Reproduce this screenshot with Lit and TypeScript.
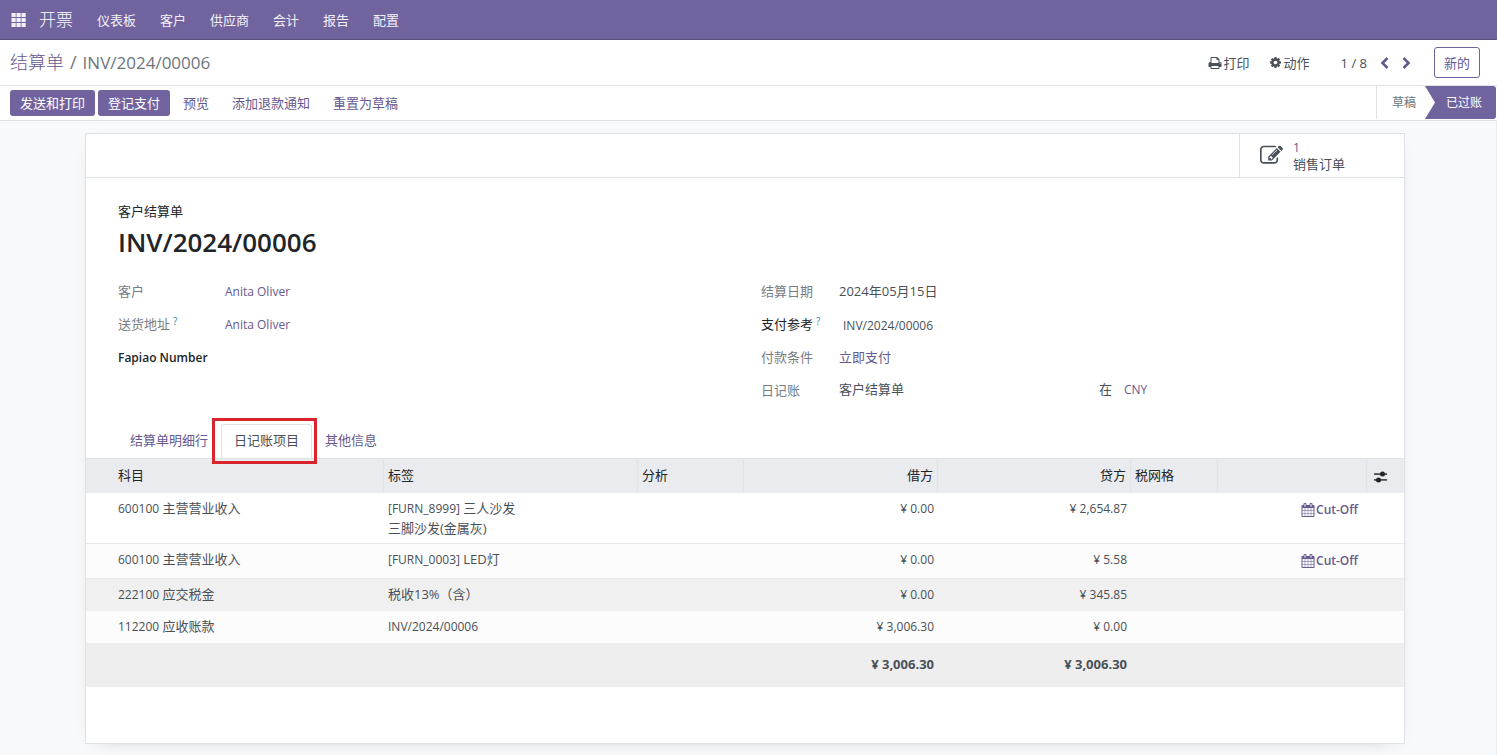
import { LitElement, html, css, svg } from "lit";
import { customElement } from "lit/decorators.js";

const ICONS = {
  print:
    "M448 1536h896v-256h-896v256zm0-640h896v-384h-160q-40 0-68-28t-28-68v-160h-640v640zm1152 64q0-26-19-45t-45-19-45 19-19 45 19 45 45 19 45-19 19-45zm128 0v416q0 13-9.5 22.5t-22.5 9.5h-224v160q0 40-28 68t-68 28h-960q-40 0-68-28t-28-68v-160h-224q-13 0-22.5-9.5t-9.5-22.5v-416q0-79 56.5-135.5t135.5-56.5h64v-544q0-40 28-68t68-28h672q40 0 88 20t76 48l152 152q28 28 48 76t20 88v256h64q79 0 135.5 56.5t56.5 135.5z",
  cog: "M1152 896q0-106-75-181t-181-75-181 75-75 181 75 181 181 75 181-75 75-181zm512-109v222q0 12-8 23t-20 13l-185 28q-19 54-39 91 35 50 107 138 10 12 10 25t-9 23q-27 37-99 108t-94 71q-12 0-26-9l-138-108q-44 23-91 38-16 136-29 186-7 28-36 28h-222q-14 0-24.5-8.5t-11.5-21.5l-28-184q-49-16-90-37l-141 107q-10 9-25 9-14 0-25-11-126-114-165-168-7-10-7-23 0-12 8-23 15-21 51-66.5t54-70.5q-27-50-41-99l-183-27q-13-2-21-12.5t-8-23.5v-222q0-12 8-23t19-13l186-28q14-46 39-92-40-57-107-138-10-12-10-24 0-10 9-23 26-36 98.5-107.5t94.5-71.5q13 0 26 10l138 107q44-23 91-38 16-136 29-186 7-28 36-28h222q14 0 24.5 8.5t11.5 21.5l28 184q49 16 90 37l142-107q9-9 24-9 13 0 25 10 129 119 165 170 7 8 7 22 0 12-8 23-15 21-51 66.5t-54 70.5q26 50 41 98l183 28q13 2 21 12.5t8 23.5z",
  edit: "M888 1184l116-116-152-152-116 116v56h96v96h56zm440-720q-16-16-33 1l-350 350q-17 17-1 33t33-1l350-350q17-17 1-33zm80 594v190q0 119-84.5 203.5t-203.5 84.5h-832q-119 0-203.5-84.5t-84.5-203.5v-832q0-119 84.5-203.5t203.5-84.5h832q63 0 117 25 15 7 18 23 3 17-9 29l-49 49q-14 14-32 8-23-6-45-6h-832q-66 0-113 47t-47 113v832q0 66 47 113t113 47h832q66 0 113-47t47-113v-126q0-13 9-22l64-64q15-15 35-7t20 29zm-96-738l288 288-672 672h-288v-288zm444 132l-92 92-288-288 92-92q28-28 68-28t68 28l152 152q28 28 28 68t-28 68z",
  calendar:
    "M192 1664h288v-288h-288v288zm352 0h320v-288h-320v288zm-352-352h288v-320h-288v320zm352 0h320v-320h-320v320zm-352-384h288v-288h-288v288zm736 736h320v-288h-320v288zm-384-736h320v-288h-320v288zm768 736h288v-288h-288v288zm-384-352h320v-320h-320v320zm-352-864v-288q0-13-9.5-22.5t-22.5-9.5h-64q-13 0-22.5 9.5t-9.5 22.5v288q0 13 9.5 22.5t22.5 9.5h64q13 0 22.5-9.5t9.5-22.5zm736 864h288v-320h-288v320zm-384-384h320v-288h-320v288zm384 0h288v-288h-288v288zm32-480v-288q0-13-9.5-22.5t-22.5-9.5h-64q-13 0-22.5 9.5t-9.5 22.5v288q0 13 9.5 22.5t22.5 9.5h64q13 0 22.5-9.5t9.5-22.5zm384-64v1280q0 52-38 90t-90 38h-1408q-52 0-90-38t-38-90v-1280q0-52 38-90t90-38h128v-96q0-66 47-113t113-47h64q66 0 113 47t47 113v96h384v-96q0-66 47-113t113-47h64q66 0 113 47t47 113v96h128q52 0 90 38t38 90z",
};

const icon = (name: keyof typeof ICONS, size: number) => html`<svg
  width=${size}
  height=${size}
  viewBox="0 0 1792 1792"
  fill="currentColor"
  aria-hidden="true"
>
  <path d=${ICONS[name]}></path>
</svg>`;

const MENUS = ["仪表板", "客户", "供应商", "会计", "报告", "配置"];

interface Line {
  code: string;
  account: string;
  ref: string;
  label: string[];
  debit: string;
  credit: string;
  cutOff: boolean;
  kind: string;
}

const LINES: Line[] = [
  { code: "600100", account: "主营营业收入", ref: "[FURN_8999]", label: ["三人沙发", "三脚沙发(金属灰)"], debit: "¥ 0.00", credit: "¥ 2,654.87", cutOff: true, kind: "product" },
  { code: "600100", account: "主营营业收入", ref: "[FURN_0003]", label: ["LED灯"], debit: "¥ 0.00", credit: "¥ 5.58", cutOff: true, kind: "product alt" },
  { code: "222100", account: "应交税金", ref: "", label: ["税收13%（含）"], debit: "¥ 0.00", credit: "¥ 345.85", cutOff: false, kind: "muted" },
  { code: "112200", account: "应收账款", ref: "INV/2024/00006", label: [], debit: "¥ 3,006.30", credit: "¥ 0.00", cutOff: false, kind: "alt" },
];

@customElement("app-root")
export class AppRoot extends LitElement {
  static styles = css`
    :host {
      display: flex;
      flex-direction: column;
      min-height: 100vh;
      box-sizing: border-box;
      font-family: "Open Sans", "Noto Sans CJK SC", sans-serif;
      font-size: 13px;
      line-height: 20px;
      color: #495057;
      background: #f8f9fa;
    }
    *,
    *::before,
    *::after {
      box-sizing: border-box;
    }
    a {
      color: inherit;
      text-decoration: none;
    }
    button,
    input {
      font: inherit;
      color: inherit;
      background: none;
      border: 0;
      padding: 0;
      margin: 0;
    }
    button {
      cursor: pointer;
    }
    svg {
      display: block;
      flex: none;
    }
    h1,
    p {
      margin: 0;
    }
    .latin {
      font-size: 12px;
    }
    .link {
      color: #66598f;
    }

    .navbar {
      display: flex;
      align-items: center;
      height: 40px;
      padding: 0 11px;
      background: #71639e;
      border-bottom: 1px solid #5a4f7f;
      color: #f3f1f8;
    }
    .brand {
      margin: 0 24px 0 13px;
      font-size: 17px;
      font-weight: 300;
      color: #fff;
    }
    .menus {
      display: flex;
      gap: 24px;
    }

    .control {
      display: flex;
      align-items: center;
      height: 46px;
      padding: 0 17px 0 10px;
      background: #fff;
      border-bottom: 1px solid #dee2e6;
    }
    .crumbs {
      display: flex;
      flex: 1;
      align-items: baseline;
      gap: 6px;
      font-size: 18px;
      color: #6c757d;
    }
    .crumbs .link {
      font-weight: 300;
    }
    .crumbs .id {
      font-size: 17px;
    }
    .tool {
      display: flex;
      align-items: center;
      gap: 2px;
      margin-right: 19px;
    }
    .pager {
      display: flex;
      align-items: center;
      gap: 13px;
      margin: 0 23px 0 12px;
    }
    .pager .link {
      display: flex;
    }
    .create {
      height: 31px;
      padding: 0 9px;
      border: 1px solid #71639e;
      border-radius: 3px;
      color: #66598f;
    }

    .statusbar {
      display: flex;
      align-items: center;
      height: 35px;
      padding: 0 1px 0 10px;
      background: #fff;
      border-bottom: 1px solid #dee2e6;
    }
    .actions {
      display: flex;
      flex: 1;
      gap: 3px;
    }
    .actions button {
      height: 26px;
      padding: 0 10px;
      border-radius: 3px;
      color: #66598f;
    }
    .actions .primary {
      background: #71639e;
      color: #fff;
    }
    .stages {
      display: flex;
      align-self: stretch;
      padding-bottom: 1px;
      font-size: 12px;
    }
    .stage {
      display: flex;
      align-items: center;
      padding: 0 9px 0 15px;
      border-left: 1px solid #dee2e6;
      color: #6c757d;
    }
    .stage.current {
      padding: 0 14px 0 21px;
      border-left: 0;
      border-radius: 0 3px 3px 0;
      background: #71639e;
      color: #fff;
      clip-path: polygon(0 0, 100% 0, 100% 100%, 0 100%, 10px 50%);
    }

    .content {
      flex: 1;
      padding: 12px 91px 11px 85px;
      border-right: 1px solid #e9ecef;
    }
    .sheet {
      min-height: 611px;
      background: #fff;
      border: 1px solid #dee2e6;
      box-shadow: 0 5px 20px -15px #0006;
    }
    .button-box {
      display: flex;
      justify-content: flex-end;
      height: 44px;
      border-bottom: 1px solid #dee2e6;
    }
    .stat {
      display: flex;
      align-items: center;
      gap: 10px;
      width: 165px;
      padding-left: 20px;
      border-left: 1px solid #dee2e6;
      text-align: left;
      line-height: 16px;
    }
    .stat-text {
      display: flex;
      flex-direction: column;
    }

    .head {
      padding: 23px 32px 0;
      color: #212529;
    }
    .head h1 {
      font-size: 26px;
      font-weight: 600;
      line-height: 42px;
    }
    .groups {
      display: grid;
      grid-template-columns: 1fr 1fr;
      gap: 32px;
      padding: 11px 32px 18px;
    }
    .group {
      display: grid;
      grid-template-columns: 78px 1fr;
      grid-auto-rows: 33px;
      align-content: start;
      align-items: center;
    }
    .group.wide {
      grid-template-columns: 107px 1fr;
    }
    .group > .latin {
      padding-top: 3px;
    }
    .group label,
    .group .label {
      white-space: nowrap;
      color: #777d83;
    }
    .group .strong {
      color: #212529;
    }
    .group .semi {
      font-weight: 600;
      color: #212529;
    }
    .group sup {
      margin-left: 3px;
      font-size: 10px;
      line-height: 0;
      vertical-align: 4px;
      color: #1f8ba3;
    }
    .group input {
      width: 100%;
      height: 24px;
      padding: 0 4px;
    }
    .journal {
      display: grid;
      grid-template-columns: 260px 25px 1fr;
      align-items: baseline;
    }

    .tabs {
      display: flex;
      height: 34px;
      padding: 0 31px;
    }
    .tab {
      position: relative;
      padding: 0 12px 3px;
      border: 1px solid transparent;
      border-bottom: 0;
      color: #66598f;
    }
    .tab.active {
      border-color: #dee2e6;
      border-radius: 3px 3px 0 0;
      color: #495057;
    }
    .marker {
      position: absolute;
      inset: -7px -6px -6px -10px;
      border: 3px solid #d9232d;
      pointer-events: none;
    }

    table {
      width: 100%;
      table-layout: fixed;
      border-collapse: separate;
      border-spacing: 0;
    }
    .c-label {
      width: 254px;
    }
    .c-analytic {
      width: 106px;
    }
    .c-debit {
      width: 194px;
    }
    .c-credit {
      width: 193px;
    }
    .c-tax {
      width: 87px;
    }
    .c-action {
      width: 149px;
    }
    .c-options {
      width: 37px;
    }
    th {
      height: 35px;
      padding: 0 4px 2px;
      border-top: 1px solid #dee2e6;
      border-right: 1px solid #dfe2e6;
      background: #e9ebee;
      font-weight: 400;
      text-align: left;
      color: #212529;
    }
    th:last-child {
      padding: 4px 0 0 6px;
      border-right: 0;
    }
    td {
      height: 32px;
      padding: 5px 4px;
      vertical-align: baseline;
    }
    td .latin {
      line-height: 0;
    }
    th:first-child,
    td:first-child {
      padding-left: 32px;
    }
    .num {
      text-align: right;
    }
    tbody .num {
      font-size: 12px;
    }
    .product td {
      height: 35px;
      border-bottom: 1px solid #e6e8ea;
    }
    .product .action {
      padding-top: 7px;
      vertical-align: top;
    }
    .alt td {
      background: #fcfcfc;
    }
    .muted td {
      background: #f0f0f0;
    }
    tfoot td {
      height: 44px;
      padding: 11px 4px;
      background: #eeeeee;
      font-weight: 700;
    }
    .cutoff {
      display: flex;
      align-items: center;
      gap: 1px;
      margin-left: auto;
      margin-right: 5px;
      font-size: 12px;
      font-weight: 600;
      color: #66598f;
    }
  `;

  private row(line: Line) {
    return html`<tr class=${line.kind}>
      <td><span class="latin">${line.code}</span> ${line.account}</td>
      <td>
        ${line.ref ? html`<span class="latin">${line.ref}</span>` : ""}
        ${line.label.map((part, i) => (i ? html`<br />${part}` : part))}
      </td>
      <td></td>
      <td class="num">${line.debit}</td>
      <td class="num">${line.credit}</td>
      <td></td>
      <td class="action">
        ${line.cutOff
          ? html`<button class="cutoff">${icon("calendar", 14)}<span>Cut-Off</span></button>`
          : ""}
      </td>
      <td></td>
    </tr>`;
  }

  private chevron(points: string) {
    return html`<svg width="9" height="12" viewBox="0 0 9 12" fill="none" stroke="currentColor" stroke-width="2.6" aria-hidden="true"><polyline points=${points}></polyline></svg>`;
  }

  render() {
    return html`
      <header class="navbar">
        <svg width="15" height="14" viewBox="0 0 15 14" fill="currentColor" aria-hidden="true">
          ${[0, 5, 10].map((y) =>
            [0, 5, 10].map((x) => svg`<rect x=${x + 0.5} y=${y} width="4.2" height="4"></rect>`)
          )}
        </svg>
        <a class="brand" href="#">开票</a>
        <nav class="menus">${MENUS.map((m) => html`<a href="#">${m}</a>`)}</nav>
      </header>

      <div class="control">
        <div class="crumbs">
          <a class="link" href="#">结算单</a><span>/</span><span class="id">INV/2024/00006</span>
        </div>
        <button class="tool">${icon("print", 14)}<span>打印</span></button>
        <button class="tool">${icon("cog", 13)}<span>动作</span></button>
        <div class="pager">
          <span>1 / 8</span>
          <button class="link" aria-label="上一页">${this.chevron("7.5,1 2.5,6 7.5,11")}</button>
          <button class="link" aria-label="下一页">${this.chevron("1.5,1 6.5,6 1.5,11")}</button>
        </div>
        <button class="create">新的</button>
      </div>

      <div class="statusbar">
        <div class="actions">
          <button class="primary">发送和打印</button>
          <button class="primary">登记支付</button>
          <button>预览</button>
          <button>添加退款通知</button>
          <button>重置为草稿</button>
        </div>
        <div class="stages">
          <span class="stage">草稿</span>
          <span class="stage current">已过账</span>
        </div>
      </div>

      <main class="content">
        <section class="sheet">
          <div class="button-box">
            <button class="stat">
              ${icon("edit", 23)}
              <span class="stat-text"><span class="link latin">1</span><span>销售订单</span></span>
            </button>
          </div>

          <div class="head">
            <p>客户结算单</p>
            <h1>INV/2024/00006</h1>
          </div>

          <div class="groups">
            <div class="group wide">
              <span class="label">客户</span>
              <a class="link latin" href="#">Anita Oliver</a>
              <span class="label">送货地址<sup>?</sup></span>
              <a class="link latin" href="#">Anita Oliver</a>
              <label class="semi latin" for="fapiao">Fapiao Number</label>
              <input id="fapiao" type="text" />
            </div>
            <div class="group">
              <span class="label">结算日期</span>
              <span>2024年05月15日</span>
              <label class="strong" for="payref">支付参考<sup>?</sup></label>
              <input id="payref" class="latin" type="text" value="INV/2024/00006" />
              <span class="label">付款条件</span>
              <a class="link" href="#">立即支付</a>
              <span class="label">日记账</span>
              <div class="journal">
                <span>客户结算单</span><span>在</span><a class="link latin" href="#">CNY</a>
              </div>
            </div>
          </div>

          <div class="tabs" role="tablist">
            <button class="tab" role="tab">结算单明细行</button>
            <button class="tab active" role="tab" aria-selected="true">
              日记账项目<span class="marker"></span>
            </button>
            <button class="tab" role="tab">其他信息</button>
          </div>

          <table>
            <colgroup>
              <col />
              <col class="c-label" />
              <col class="c-analytic" />
              <col class="c-debit" />
              <col class="c-credit" />
              <col class="c-tax" />
              <col class="c-action" />
              <col class="c-options" />
            </colgroup>
            <thead>
              <tr>
                <th>科目</th>
                <th>标签</th>
                <th>分析</th>
                <th class="num">借方</th>
                <th class="num">贷方</th>
                <th>税网格</th>
                <th></th>
                <th>
                  <button aria-label="可选列">
                    <svg width="16" height="12" viewBox="0 0 16 12" fill="currentColor" aria-hidden="true">
                      <rect x="1" y="2.4" width="13" height="1.4"></rect>
                      <rect x="1" y="8.2" width="13" height="1.4"></rect>
                      <circle cx="9.5" cy="3.1" r="2.5"></circle>
                      <circle cx="5.5" cy="8.9" r="2.5"></circle>
                    </svg>
                  </button>
                </th>
              </tr>
            </thead>
            <tbody>
              ${LINES.map((l) => this.row(l))}
            </tbody>
            <tfoot>
              <tr>
                <td colspan="3"></td>
                <td class="num">¥ 3,006.30</td>
                <td class="num">¥ 3,006.30</td>
                <td colspan="3"></td>
              </tr>
            </tfoot>
          </table>
        </section>
      </main>
    `;
  }
}
